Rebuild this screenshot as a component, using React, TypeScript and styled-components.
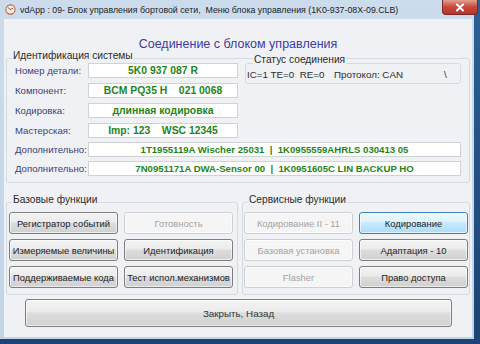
import { createGlobalStyle, styled } from "styled-components";

const GlobalStyle = createGlobalStyle`
  html, body {
    margin: 0;
    padding: 0;
  }
  body {
    background: #1f4a7a;
    font-family: "Liberation Sans", Arial, sans-serif;
  }
`;

const Screen = styled.div`
  position: relative;
  width: 480px;
  height: 344px;
  overflow: hidden;
  background: linear-gradient(180deg, #2e5f94 0%, #1b4373 100%);
`;

const Window = styled.div`
  width: 474px;
  height: 339px;
  display: flex;
  flex-direction: column;
  background: linear-gradient(180deg, #cddcec 0%, #c2d4e7 100%);
`;

const TitleBar = styled.div`
  height: 19px;
  display: flex;
  align-items: center;
  gap: 4px;
  padding-left: 5px;
  font-size: 8.8px;
  color: #1c1c1c;
  white-space: pre;
`;

const CloseButton = styled.div`
  position: absolute;
  top: 0;
  left: 442px;
  width: 36px;
  height: 15px;
  display: flex;
  align-items: center;
  justify-content: center;
  border: 1px solid #7a2a2a;
  border-top: none;
  border-radius: 0 0 4px 4px;
  background: linear-gradient(180deg, #e0a090 0%, #c8483a 50%, #b8342a 100%);
  box-sizing: border-box;
`;

const Client = styled.div`
  flex: 1;
  margin: 0 2px 2px 4px;
  background: #f0f1f4;
  display: flex;
  flex-direction: column;
`;

const Heading = styled.div`
  margin-top: 16px;
  height: 18px;
  line-height: 18px;
  text-align: center;
  font-size: 12.5px;
  color: #3b3ba2;
`;

const Group = styled.div`
  position: relative;
  border: 1px solid #d3dbe3;
  border-radius: 3px;
`;

const GroupLabel = styled.span`
  position: absolute;
  top: -9px;
  left: 5px;
  padding: 0 1px;
  font-size: 10.2px;
  line-height: 12px;
  color: #2c2c2c;
  background: #f0f1f4;
`;

const IdGroup = styled(Group)`
  margin: 5px 2px 0 2px;
  padding: 4px 8px 6px 8px;
`;

const TopBlock = styled.div`
  display: flex;
  gap: 7px;
`;

const Rows = styled.div<{ $gap: number }>`
  display: flex;
  flex-direction: column;
  gap: ${(p) => p.$gap}px;
`;

const Row = styled.div`
  display: flex;
  align-items: center;
  height: 15px;
`;

const Label = styled.div`
  width: 73px;
  font-size: 9.6px;
  color: #3d3d7e;
  white-space: nowrap;
`;

const Field = styled.div<{ $wide?: boolean }>`
  width: ${(p) => (p.$wide ? 373 : 150)}px;
  height: 15px;
  box-sizing: border-box;
  border: 1px solid #cfd3d8;
  background: #ffffff;
  display: flex;
  align-items: center;
  justify-content: center;
  font-size: ${(p) => (p.$wide ? 9.6 : 10.4)}px;
  font-weight: bold;
  color: #1f8520;
  white-space: pre;
`;

const StatusGroup = styled(Group)`
  width: 216px;
  height: 21px;
  box-sizing: border-box;
  display: flex;
  align-items: flex-end;
  padding: 0 0 3px 1px;
  font-size: 9.8px;
  color: #2c2c2c;
  white-space: pre;
`;

const StatusLabel = styled(GroupLabel)`
  left: 7px;
  top: -10px;
`;

const StatusItem = styled.span<{ $w: number }>`
  width: ${(p) => p.$w}px;
`;

const ExtraRows = styled(Rows)`
  margin-top: 4px;
`;

const BottomRow = styled.div`
  display: grid;
  grid-template-columns: 232px 228px;
  gap: 4px;
  margin: 19px 0 0 2px;
`;

const FuncGroup = styled(Group)<{ $left?: boolean }>`
  padding: 9px ${(p) => (p.$left ? "4px 6px 2px" : "1px 6px 1px")};
  display: grid;
  grid-template-columns: 109px 109px;
  justify-content: space-between;
  row-gap: 5px;
`;

type Variant = "normal" | "disabled" | "active";

const Button = styled.div<{ $variant?: Variant }>`
  height: 22px;
  box-sizing: border-box;
  border-radius: 3px;
  display: flex;
  align-items: center;
  justify-content: center;
  font-size: 9.4px;
  white-space: nowrap;
  color: ${(p) => (p.$variant === "disabled" ? "#a3a3a3" : "#1e1e1e")};
  border: 1px solid
    ${(p) =>
      p.$variant === "disabled" ? "#cdd0d3" : p.$variant === "active" ? "#3c82b8" : "#7d7d7d"};
  background: ${(p) =>
    p.$variant === "disabled"
      ? "#f5f5f6"
      : p.$variant === "active"
      ? "linear-gradient(180deg, #eef8fe 0%, #ddf2fd 45%, #c6e9fd 50%, #aedcf5 100%)"
      : "linear-gradient(180deg, #f3f3f3 0%, #ebebeb 45%, #dddddd 50%, #d0d0d0 100%)"};
  box-shadow: inset 0 0 0 1px rgba(255, 255, 255, 0.6);
`;

const CloseBig = styled(Button)`
  height: 28px;
  width: 427px;
  margin: 4px 0 0 21px;
  font-size: 9.8px;
  color: #333333;
`;

function AppIcon() {
  return (
    <svg width="11" height="11" viewBox="0 0 11 11">
      <circle cx="5.5" cy="5.5" r="4.6" fill="#f6efe6" stroke="#c0643c" strokeWidth="1.1" />
      <path d="M5.5 5.5 L3 3.6 M5.5 5.5 L7.6 4.4" stroke="#b04a2a" strokeWidth="1" strokeLinecap="round" />
    </svg>
  );
}

const idRows = [
  { label: "Номер детали:", value: "5K0 937 087 R" },
  { label: "Компонент:", value: "BCM PQ35 H    021 0068" },
  { label: "Кодировка:", value: "длинная кодировка" },
  { label: "Мастерская:", value: "Imp: 123    WSC 12345" },
];

const extraRows = [
  "1T1955119A Wischer 25031  |  1K0955559AHRLS 030413 05",
  "7N0951171A DWA-Sensor 00  |  1K0951605C LIN BACKUP HO",
];

const baseButtons: { label: string; variant?: Variant }[] = [
  { label: "Регистратор событий" },
  { label: "Готовность", variant: "disabled" },
  { label: "Измеряемые величины" },
  { label: "Идентификация" },
  { label: "Поддерживаемые кода" },
  { label: "Тест испол.механизмов" },
];

const serviceButtons: { label: string; variant?: Variant }[] = [
  { label: "Кодирование II - 11", variant: "disabled" },
  { label: "Кодирование", variant: "active" },
  { label: "Базовая установка", variant: "disabled" },
  { label: "Адаптация - 10" },
  { label: "Flasher", variant: "disabled" },
  { label: "Право доступа" },
];

export default function App() {
  return (
    <Screen>
      <GlobalStyle />
      <Window>
        <TitleBar>
          <AppIcon />
          <span>vdApp : 09- Блок управления бортовой сети,  Меню блока управления (1K0-937-08X-09.CLB)</span>
        </TitleBar>
        <Client>
          <Heading>Соединение с блоком управления</Heading>
          <IdGroup>
            <GroupLabel>Идентификация системы</GroupLabel>
            <TopBlock>
              <Rows $gap={5}>
                {idRows.map((r) => (
                  <Row key={r.label}>
                    <Label>{r.label}</Label>
                    <Field>{r.value}</Field>
                  </Row>
                ))}
              </Rows>
              <StatusGroup>
                <StatusLabel>Статус соединения</StatusLabel>
                <StatusItem $w={87}>IC=1 TE=0  RE=0</StatusItem>
                <StatusItem $w={110}>Протокол: CAN</StatusItem>
                <span>\</span>
              </StatusGroup>
            </TopBlock>
            <ExtraRows $gap={4}>
              {extraRows.map((v) => (
                <Row key={v}>
                  <Label>Дополнительно:</Label>
                  <Field $wide>{v}</Field>
                </Row>
              ))}
            </ExtraRows>
          </IdGroup>
          <BottomRow>
            <FuncGroup $left>
              <GroupLabel>Базовые функции</GroupLabel>
              {baseButtons.map((b) => (
                <Button key={b.label} $variant={b.variant}>
                  {b.label}
                </Button>
              ))}
            </FuncGroup>
            <FuncGroup>
              <GroupLabel>Сервисные функции</GroupLabel>
              {serviceButtons.map((b) => (
                <Button key={b.label} $variant={b.variant}>
                  {b.label}
                </Button>
              ))}
            </FuncGroup>
          </BottomRow>
          <CloseBig>Закрыть, Назад</CloseBig>
        </Client>
      </Window>
      <CloseButton>
        <svg width="10" height="9" viewBox="0 0 10 9">
          <path d="M2 1.5 L8 7.5 M8 1.5 L2 7.5" stroke="#ffffff" strokeWidth="2" strokeLinecap="round" />
        </svg>
      </CloseButton>
    </Screen>
  );
}
